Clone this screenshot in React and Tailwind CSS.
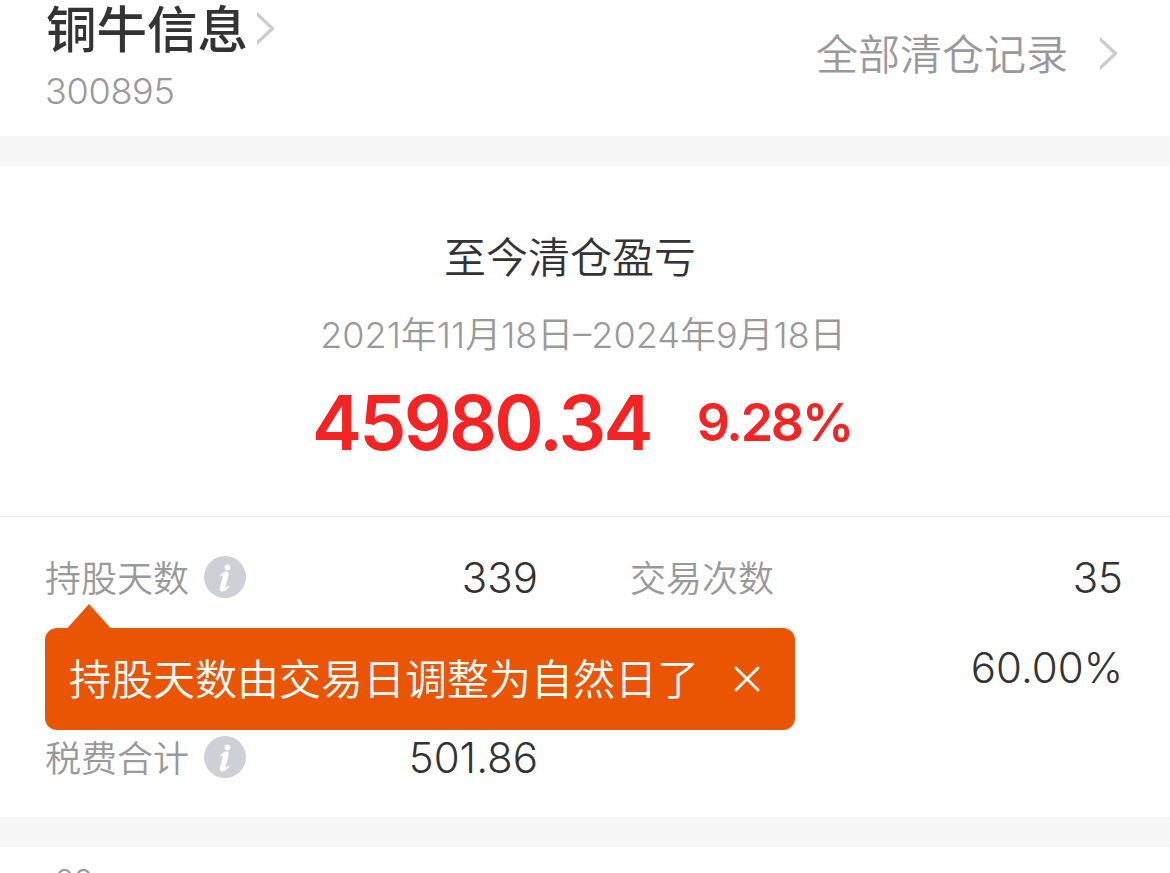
function Chevron({ className }) {
  return (
    <svg className={className} width="18" height="36" viewBox="0 0 18 36" fill="none">
      <path d="M-1 2 L15.5 17.5 L-1 33" stroke="#cccccc" strokeWidth="3.2" strokeLinejoin="round" />
    </svg>
  );
}

function InfoIcon() {
  return (
    <svg className="ml-[15px] shrink-0" width="42" height="42" viewBox="0 0 42 42">
      <circle cx="21" cy="21" r="21" fill="#cdd0d6" />
      <circle cx="23.5" cy="11.3" r="2.9" fill="#fff" />
      <path
        d="M16 19.700c2-2.200 4.600-4 6.500-4 1.700 0 2.300 1.100 1.900 2.900l-3 11.800c-.2.9 0 1.300.5 1.300.6 0 1.500-.7 2.500-1.700l.7.6c-2.100 2.700-4.500 4.700-6.900 4.700-2 0-2.500-1.400-2.100-3.200l2.800-11.100c.3-1.200.2-1.800-.3-1.800-.6 0-1.300.5-2.200 1.200z"
        fill="#fff"
        stroke="#fff"
        strokeWidth="0.6"
      />
    </svg>
  );
}

const num = "font-['Inter','Noto_Sans_CJK_SC',sans-serif]";

export default function App() {
  return (
    <div className="flex h-[873px] w-[1170px] flex-col overflow-hidden bg-white font-['Noto_Sans_CJK_SC',sans-serif] font-[350] whitespace-nowrap text-[#333333]">
      <header className="flex h-[136px] shrink-0 justify-between pr-[52px] pl-[46px]">
        <div>
          <div className="flex h-[58px] items-center">
            <h1 className="pb-[5px] text-[50.500px] leading-[53px] font-medium">铜牛信息</h1>
            <Chevron className="ml-[9px]" />
          </div>
          <div className={`-ml-px text-[36px] leading-[66px] tracking-[-0.3px] text-[#999999] ${num}`}>300895</div>
        </div>
        <div className="flex h-[108px] items-center text-[#999999]">
          <span className="pb-[5px] text-[42px] leading-[60px]">全部清仓记录</span>
          <Chevron className="ml-[32px]" />
        </div>
      </header>
      <div className="h-[30px] shrink-0 bg-[#f7f7f7]" />

      <section className="flex h-[351px] shrink-0 flex-col items-center border-b border-[#ebebeb] pt-[59px]">
        <h2 className="-ml-[30px] text-[42px] leading-[60px]">至今清仓盈亏</h2>
        <div className={`mt-[20px] -ml-[4px] text-[36px] leading-[60px] text-[#999999] ${num}`}>
          2021年11月18日–2024年9月18日
        </div>
        <div className={`mt-[13px] -ml-[6px] flex h-[90px] items-center text-[#f42424] ${num}`}>
          <span className="text-[75px] leading-[90px] font-semibold tracking-[-2.700px]">45980.34</span>
          <span className="ml-[46px] text-[52px] leading-[90px] font-semibold tracking-[-2.200px]">9.28%</span>
        </div>
      </section>

      <section className="relative flex h-[300px] shrink-0 flex-col pt-[15px] pr-[47px] pl-[45px] text-[36px]">
        <div className="flex h-[90px] items-center">
          <div className="flex w-[493px] items-center">
            <span className="pb-[3px] text-[#999999]">持股天数</span>
            <InfoIcon />
            <span className={`ml-auto text-[42px] ${num}`}>339</span>
          </div>
          <span className="ml-[92px] pb-[3px] text-[#999999]">交易次数</span>
          <span className={`ml-auto text-[42px] ${num}`}>35</span>
        </div>
        <div className="flex h-[90px] items-center justify-end">
          <span className={`text-[42px] ${num}`}>60.00%</span>
        </div>
        <div className="flex h-[90px] w-[493px] items-center">
          <span className="pb-[3px] text-[#999999]">税费合计</span>
          <InfoIcon />
          <span className={`ml-auto text-[42px] ${num}`}>501.86</span>
        </div>

        <div className="absolute top-[87px] left-[45px] w-[750px]">
          <svg className="ml-[22px] block" width="44" height="24" viewBox="0 0 44 24">
            <path d="M22 0 L43.500 24 H.5 Z" fill="#ea5504" />
          </svg>
          <div className="flex h-[102px] items-center rounded-[12px] bg-[#ea5504] pl-[24px] text-white">
            <span className="pb-[5px] text-[42px] leading-[60px]">持股天数由交易日调整为自然日了</span>
            <svg className="ml-[35px]" width="26" height="26" viewBox="0 0 26 26" fill="none">
              <path d="M2 2 L24 24 M24 2 L2 24" stroke="#fff" strokeWidth="2.800" strokeLinecap="round" />
            </svg>
          </div>
        </div>
      </section>
      <div className="h-[30px] shrink-0 bg-[#f7f7f7]" />
      <div className={`shrink-0 pt-[10px] pl-[54px] text-[33px] leading-[48px] tracking-[-0.5px] text-[#999999] ${num}`}>60</div>
    </div>
  );
}
